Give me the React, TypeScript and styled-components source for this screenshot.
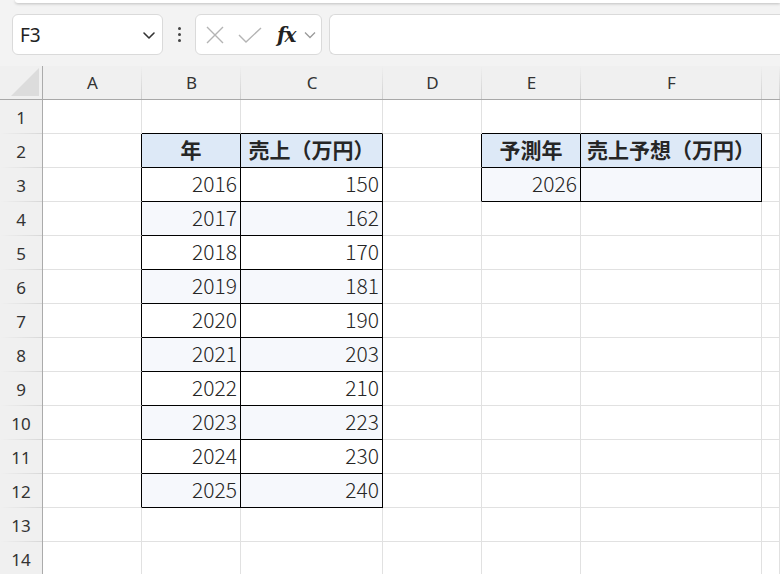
import React from 'react';
import styled, { createGlobalStyle } from 'styled-components';

const GlobalStyle = createGlobalStyle`
  html, body {
    margin: 0;
    padding: 0;
    background: #ffffff;
    overflow: hidden;
  }
  body {
    width: 780px;
    height: 574px;
    font-family: "Noto Sans CJK JP", "Noto Sans", sans-serif;
  }
`;

const COLS = ['A', 'B', 'C', 'D', 'E', 'F', 'G'];
const ROW_COUNT = 14;

type CellData = { text: string; kind: 'head' | 'num' };

const years = [2016, 2017, 2018, 2019, 2020, 2021, 2022, 2023, 2024, 2025];
const sales = [150, 162, 170, 181, 190, 203, 210, 223, 230, 240];

const cells: Record<string, CellData> = {
  B2: { text: '年', kind: 'head' },
  C2: { text: '売上（万円）', kind: 'head' },
  E2: { text: '予測年', kind: 'head' },
  F2: { text: '売上予想（万円）', kind: 'head' },
  E3: { text: '2026', kind: 'num' },
};
years.forEach((y, i) => {
  cells[`B${i + 3}`] = { text: String(y), kind: 'num' };
  cells[`C${i + 3}`] = { text: String(sales[i]), kind: 'num' };
});

const tables = [
  { c0: 1, c1: 2, r0: 2, r1: 12, band: (r: number) => r % 2 === 0 },
  { c0: 4, c1: 5, r0: 2, r1: 3, band: () => true },
];

const tableAt = (c: number, r: number) =>
  tables.find((t) => c >= t.c0 && c <= t.c1 && r >= t.r0 && r <= t.r1);

const cellFill = (c: number, r: number) => {
  const t = tableAt(c, r);
  if (!t) return 'transparent';
  if (r === t.r0) return '#dde9f7';
  return t.band(r) ? '#f6f8fc' : '#ffffff';
};

const App: React.FC = () => {
  const rows = Array.from({ length: ROW_COUNT }, (_, i) => i + 1);

  return (
    <>
      <GlobalStyle />
      <Window>
        <Toolbar>
          <RibbonEdge />
          <FormulaBar>
            <NameBox>
              <NameText>F3</NameText>
              <svg width="16" height="16" viewBox="0 0 16 16">
                <path d="M3 6l5 5 5-5" fill="none" stroke="#333" strokeWidth="1.6" strokeLinecap="round" strokeLinejoin="round" />
              </svg>
            </NameBox>
            <Grip>
              <Dot />
              <Dot />
              <Dot />
            </Grip>
            <FuncBox>
              <svg width="20" height="20" viewBox="0 0 20 20">
                <path d="M2 2l16 16M18 2L2 18" stroke="#b4b4b4" strokeWidth="1.4" />
              </svg>
              <svg width="24" height="20" viewBox="0 0 24 20">
                <path d="M1 10l7 7L23 3" fill="none" stroke="#b4b4b4" strokeWidth="1.4" />
              </svg>
              <FxLabel>fx</FxLabel>
              <svg width="14" height="14" viewBox="0 0 14 14">
                <path d="M2 4.5l5 5 5-5" fill="none" stroke="#9a9a9a" strokeWidth="1.3" />
              </svg>
            </FuncBox>
            <FormulaInput />
          </FormulaBar>
        </Toolbar>

        <Sheet>
          <Corner>
            <svg width="28" height="28" viewBox="0 0 28 28">
              <polygon points="28,0 28,28 0,28" fill="#dcdcdc" />
            </svg>
          </Corner>
          {COLS.map((c) => (
            <ColHead key={c}>{c === 'G' ? '' : c}</ColHead>
          ))}
          {rows.map((r) => (
            <React.Fragment key={r}>
              <RowHead>{r}</RowHead>
              {COLS.map((col, ci) => {
                const data = cells[`${col}${r}`];
                const inT = !!tableAt(ci, r);
                const rightDark = inT || !!tableAt(ci + 1, r);
                const bottomDark = inT || !!tableAt(ci, r + 1);
                return (
                  <Cell
                    key={col}
                    $fill={cellFill(ci, r)}
                    $right={rightDark ? '#000' : '#e1e1e1'}
                    $bottom={bottomDark ? '#000' : '#e1e1e1'}
                    $head={data?.kind === 'head'}
                  >
                    {data?.text}
                  </Cell>
                );
              })}
            </React.Fragment>
          ))}
        </Sheet>
      </Window>
    </>
  );
};

const Window = styled.div`
  display: flex;
  flex-direction: column;
  width: 780px;
  height: 574px;
  overflow: hidden;
`;

const Toolbar = styled.div`
  display: flex;
  flex-direction: column;
  flex-shrink: 0;
  background: #f3f3f3;
  height: 66px;
  box-sizing: border-box;
`;

const RibbonEdge = styled.div`
  height: 3px;
  flex-shrink: 0;
  margin-left: 15px;
  background: #ffffff;
  border-bottom-left-radius: 6px;
  box-shadow: 0 1px 3px rgba(0, 0, 0, 0.22);
`;

const FormulaBar = styled.div`
  display: flex;
  align-items: center;
  flex-shrink: 0;
  margin-top: 11px;
  height: 41px;
  padding-left: 12px;
`;

const Box = styled.div`
  height: 41px;
  box-sizing: border-box;
  background: #ffffff;
  border: 1px solid #dadada;
  border-radius: 6px;
  display: flex;
  align-items: center;
`;

const NameBox = styled(Box)`
  width: 151px;
  padding: 0 5px 0 7px;
  justify-content: space-between;
`;

const NameText = styled.span`
  font-family: "Noto Sans", "Open Sans", sans-serif;
  font-size: 19px;
  color: #222;
`;

const Grip = styled.div`
  width: 32px;
  display: flex;
  flex-direction: column;
  align-items: center;
  gap: 3px;
`;

const Dot = styled.span`
  width: 3px;
  height: 3px;
  border-radius: 50%;
  background: #444;
`;

const FuncBox = styled(Box)`
  width: 127px;
  padding: 0 3px 0 9px;
  gap: 13px;
  svg:last-child {
    margin-left: -6px;
  }
`;

const FxLabel = styled.span`
  font-family: "DejaVu Serif", "Liberation Serif", serif;
  font-style: italic;
  font-weight: bold;
  font-size: 20px;
  color: #222;
  letter-spacing: -1px;
  margin-left: 2px;
`;

const FormulaInput = styled(Box)`
  flex: 1;
  margin-left: 7px;
  border-top-right-radius: 0;
  border-bottom-right-radius: 0;
  border-right: none;
`;

const Sheet = styled.div`
  display: grid;
  flex-shrink: 0;
  grid-template-columns: 43px 99px 99px 142px 99px 99px 181px 1fr;
  grid-auto-rows: 34px;
`;

const HeadBase = styled.div`
  box-sizing: border-box;
  display: flex;
  align-items: center;
  justify-content: center;
  background-color: #f0f0f0;
  color: #333;
  font-family: "Noto Sans", "Open Sans", sans-serif;
  font-size: 17px;
  line-height: 1;
`;

const Corner = styled(HeadBase)`
  align-items: flex-end;
  justify-content: flex-end;
  padding: 0 3px 3px 0;
  border-right: 1px solid #ababab;
  border-bottom: 1px solid #a8a8a8;
`;

const ColHead = styled(HeadBase)`
  border-bottom: 1px solid #a8a8a8;
  background-image: linear-gradient(to bottom, rgba(210, 210, 210, 0), #cfcfcf);
  background-size: 1px 100%;
  background-position: right top;
  background-repeat: no-repeat;
`;

const RowHead = styled(HeadBase)`
  border-right: 1px solid #ababab;
  background-image: linear-gradient(to right, rgba(220, 220, 220, 0), #d8d8d8);
  background-size: 100% 1px;
  background-position: left bottom;
  background-repeat: no-repeat;
`;

const Cell = styled.div<{ $fill: string; $right: string; $bottom: string; $head: boolean }>`
  box-sizing: border-box;
  display: flex;
  align-items: center;
  justify-content: ${(p) => (p.$head ? 'center' : 'flex-end')};
  padding: 0 3px 3px;
  background: ${(p) => p.$fill};
  border-right: 1px solid ${(p) => p.$right};
  border-bottom: 1px solid ${(p) => p.$bottom};
  font-family: "Noto Sans CJK JP", "Noto Sans", sans-serif;
  font-size: 21px;
  line-height: 1;
  font-weight: ${(p) => (p.$head ? 700 : 300)};
  color: #262626;
  white-space: nowrap;
  overflow: hidden;
`;

export default App;
